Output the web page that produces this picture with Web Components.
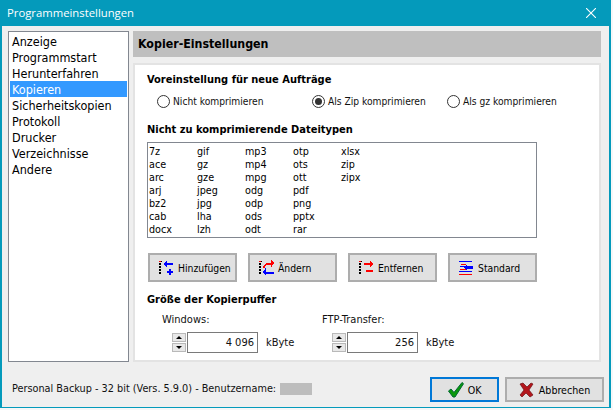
<!DOCTYPE html>
<html lang="de">
<head>
<meta charset="utf-8">
<title>Programmeinstellungen</title>
<style>
  html, body { margin: 0; padding: 0; background: #f7f7f7; }
  body { font: 11px "DejaVu Sans Condensed", "DejaVu Sans", sans-serif; font-stretch: condensed; color: #000; }
</style>
</head>
<body>
<pb-dialog caption="Programmeinstellungen">
  <pb-nav slot="nav">
    <pb-nav-item>Anzeige</pb-nav-item>
    <pb-nav-item>Programmstart</pb-nav-item>
    <pb-nav-item>Herunterfahren</pb-nav-item>
    <pb-nav-item selected>Kopieren</pb-nav-item>
    <pb-nav-item>Sicherheitskopien</pb-nav-item>
    <pb-nav-item>Protokoll</pb-nav-item>
    <pb-nav-item>Drucker</pb-nav-item>
    <pb-nav-item>Verzeichnisse</pb-nav-item>
    <pb-nav-item>Andere</pb-nav-item>
  </pb-nav>

  <pb-panel slot="panel" heading="Kopier-Einstellungen">
    <pb-heading style="margin-top:6px">Voreinstellung für neue Aufträge</pb-heading>
    <pb-radio-row>
      <pb-radio>Nicht komprimieren</pb-radio>
      <pb-radio checked>Als Zip komprimieren</pb-radio>
      <pb-radio>Als gz komprimieren</pb-radio>
    </pb-radio-row>

    <pb-heading style="margin-top:12px">Nicht zu komprimierende Dateitypen</pb-heading>
    <pb-file-box>
      <span>7z</span><span>ace</span><span>arc</span><span>arj</span><span>bz2</span><span>cab</span><span>docx</span>
      <span>gif</span><span>gz</span><span>gze</span><span>jpeg</span><span>jpg</span><span>lha</span><span>lzh</span>
      <span>mp3</span><span>mp4</span><span>mpg</span><span>odg</span><span>odp</span><span>ods</span><span>odt</span>
      <span>otp</span><span>ots</span><span>ott</span><span>pdf</span><span>png</span><span>pptx</span><span>rar</span>
      <span>xlsx</span><span>zip</span><span>zipx</span>
    </pb-file-box>

    <pb-button-row>
      <pb-button wide icon="add">Hinzufügen</pb-button>
      <pb-button wide icon="change">Ändern</pb-button>
      <pb-button wide icon="remove">Entfernen</pb-button>
      <pb-button wide icon="standard">Standard</pb-button>
    </pb-button-row>

    <pb-heading style="margin-top:9px">Größe der Kopierpuffer</pb-heading>
    <pb-spin-row>
      <pb-spin label="Windows:" value="4 096" unit="kByte"></pb-spin>
      <pb-spin label="FTP-Transfer:" value="256" unit="kByte"></pb-spin>
    </pb-spin-row>
  </pb-panel>

  <pb-status slot="status" user="Benutzername:">Personal Backup - 32 bit (Vers. 5.9.0) -</pb-status>
  <pb-button slot="actions" default icon="ok" style="width:69px">OK</pb-button>
  <pb-button slot="actions" icon="cancel" style="width:99px">Abbrechen</pb-button>
</pb-dialog>

<script>
// Icons for the buttons, all on a 16x16 grid
const dots = '<path fill="#000" d="M0 3h2v2H0zM0 6h2v2H0zM0 9h2v2H0zM0 12h2v2H0z"/><path fill="#f00" d="M0 1h2v1H0z"/><path fill="#000" d="M2 1h1v1H2z"/>';
const ICONS = {
  add: dots + '<path fill="#00f" d="M8 3h6v2H8zM7 1h1v6H7zM6 2h1v4H6zM5 3h1v2H5zM10 9h2v2h2v2h-2v2h-2v-2H8v-2h2z"/>',
  change: dots + '<path fill="#f00" d="M5 5h1V4h1V3h6v2H7v1H6v2H4V6h1z"/><path fill="#f00" d="M12 0h1v1h1v1h1v2h-1v1h-1v2h-1z"/><path fill="#00f" d="M7 12h8v2H7z"/><path fill="#00f" d="M6 8h1v7H6V14H5v-1H4v-2h1v-1h1z"/>',
  remove: dots + '<path fill="#f00" d="M5 3h7v2H5zM11 1h1v6h-1zM12 2h1v4h-1zM13 3h1v2h-1zM7 10h7v2H7z"/>',
  standard: '<path fill="#00f" d="M0 1h13v1H0zM1 6h6v1H1zM0 11h13v1H0z"/><path fill="#f00" d="M2 4h5v1H2zM1 9h6v1H1zM0 14h13v1H0z"/><path fill="#00f" d="M8 6h6v3H8zM7 5h1v5H7zM6 6h1v3H6zM5 7h1v1H5z"/>',
  ok: '<path fill="#0a9a0a" stroke="#063" stroke-width="1" d="M.5 9l2.5-2 3 3.5L14 .5l1.5 1.2L7 15H5z"/>',
  cancel: '<path fill="#b3161c" stroke="#6d1014" stroke-width=".7" d="M1 2l3-1 4 4 4-4 2 1-4 6 4 5-3 2-4-4-4 4-2-2 4-5z"/>'
};

class PbDialog extends HTMLElement {
  constructor() {
    super();
    this.attachShadow({ mode: 'open' });
  }
  connectedCallback() {
    this.shadowRoot.innerHTML = `
      <style>
        :host { display: flex; flex-direction: column; box-sizing: border-box; width: 611px; height: 408px;
                background: #efefef; border: 2px solid #049abb; border-top: 0; border-bottom-width: 1px; }
        .title { display: flex; align-items: center; justify-content: space-between; box-sizing: border-box; height: 26px; margin: 0 -2px;
                 background: #049abb; color: #fff; padding: 0 15px 1px 7px; font: 11.3px "Open Sans", sans-serif; flex: none; }
        .title svg { display: block; }
        .main { display: flex; gap: 4px; height: 331px; margin: 5px 8px 0 6px; flex: none; }
        .footer { display: flex; align-items: center; justify-content: space-between; height: 25px;
                  margin: 15px 5px 0 10px; }
        .actions { display: flex; gap: 6px; }
      </style>
      <div class="title">
        <span>${this.getAttribute('caption')}</span>
        <svg width="10" height="10" viewBox="0 0 10 10"><path d="M0 0l10 10M10 0L0 10" stroke="#fff" stroke-width="1.1"/></svg>
      </div>
      <div class="main"><slot name="nav"></slot><slot name="panel"></slot></div>
      <div class="footer"><slot name="status"></slot><div class="actions"><slot name="actions"></slot></div></div>`;
  }
}

class PbNav extends HTMLElement {
  constructor() {
    super();
    this.attachShadow({ mode: 'open' }).innerHTML = `
      <style>
        :host { display: block; box-sizing: border-box; width: 121px; height: 100%; background: #fff;
                border: 1px solid #828790; padding: 1px; }
      </style>
      <slot></slot>`;
  }
}

class PbNavItem extends HTMLElement {
  constructor() {
    super();
    this.attachShadow({ mode: 'open' }).innerHTML = `
      <style>
        :host { display: block; height: 16px; line-height: 18px; padding-left: 2px; font-size: 12.5px; white-space: nowrap; }
        :host([selected]) { background: #3399ff; color: #fff; }
      </style>
      <slot></slot>`;
  }
}

class PbPanel extends HTMLElement {
  constructor() {
    super();
    this.attachShadow({ mode: 'open' });
  }
  connectedCallback() {
    this.shadowRoot.innerHTML = `
      <style>
        :host { display: flex; flex-direction: column; width: 468px; height: 100%; }
        h2 { margin: 0; height: 26px; line-height: 26px; padding-left: 5px; background: #bfbfbf;
             font-size: 12.3px; font-weight: 700; flex: none; }
        .body { flex: 1; margin-top: 6px; box-sizing: border-box; background: #fff; border: 2px solid #e3e3e3;
                padding-left: 12px; }
      </style>
      <h2>${this.getAttribute('heading')}</h2>
      <div class="body"><slot></slot></div>`;
  }
}

class PbHeading extends HTMLElement {
  constructor() {
    super();
    this.attachShadow({ mode: 'open' }).innerHTML = `
      <style>
        :host { display: block; height: 16px; line-height: 18px; font-size: 11px; font-weight: 700; }
      </style>
      <slot></slot>`;
  }
}

class PbRadioRow extends HTMLElement {
  constructor() {
    super();
    this.attachShadow({ mode: 'open' }).innerHTML = `
      <style>
        :host { display: grid; grid-template-columns: 155px 135px 1fr; margin: 6px 0 0 10px; }
      </style>
      <slot></slot>`;
  }
}

class PbRadio extends HTMLElement {
  constructor() {
    super();
    this.attachShadow({ mode: 'open' }).innerHTML = `
      <style>
        :host { display: flex; align-items: center; gap: 3px; height: 16px; font-size: 10.2px; color: #111; white-space: nowrap; }
        svg { display: block; flex: none; }
        .dot { display: none; }
        :host([checked]) .dot { display: block; }
      </style>
      <svg width="13" height="13" viewBox="0 0 13 13">
        <circle cx="6.5" cy="6.5" r="6" fill="#fff" stroke="#333" stroke-width="1"/>
        <circle class="dot" cx="6.5" cy="6.5" r="3.5" fill="#333"/>
      </svg>
      <slot></slot>`;
  }
}

class PbFileBox extends HTMLElement {
  constructor() {
    super();
    this.attachShadow({ mode: 'open' }).innerHTML = `
      <style>
        :host { display: grid; grid-auto-flow: column; grid-template-rows: repeat(7, 13px); grid-auto-columns: 48px;
                align-content: start; box-sizing: border-box; width: 390px; height: 96px; margin-top: 5px;
                padding: 2px 0 0 1px; border: 1px solid #828790; font-size: 10.7px; line-height: 13px; }
      </style>
      <slot></slot>`;
  }
}

class PbButtonRow extends HTMLElement {
  constructor() {
    super();
    this.attachShadow({ mode: 'open' }).innerHTML = `
      <style>
        :host { display: flex; gap: 11px; margin: 15px 0 0 1px; }
      </style>
      <slot></slot>`;
  }
}

class PbButton extends HTMLElement {
  constructor() {
    super();
    this.attachShadow({ mode: 'open' });
  }
  connectedCallback() {
    const icon = ICONS[this.getAttribute('icon')] || '';
    this.shadowRoot.innerHTML = `
      <style>
        :host { display: flex; align-items: center; justify-content: center; gap: 4px; box-sizing: border-box;
                height: 25px; background: #e1e1e1; border: 2px solid #adadad; font-size: 10.6px; white-space: nowrap; }
        :host([default]) { border-color: #0078d7; }
        :host([wide]) { width: 89px; height: 29px; justify-content: flex-start; padding-left: 9px; gap: 3px; font-size: 10.3px; }
        svg { display: block; flex: none; }
      </style>
      <svg width="16" height="16" viewBox="0 0 16 16" shape-rendering="${/ok|cancel/.test(this.getAttribute('icon')) ? 'auto' : 'crispEdges'}">${icon}</svg>
      <slot></slot>`;
  }
}

class PbSpinRow extends HTMLElement {
  constructor() {
    super();
    this.attachShadow({ mode: 'open' }).innerHTML = `
      <style>
        :host { display: grid; grid-template-columns: 160px 1fr; margin: 4px 0 0 15px; }
      </style>
      <slot></slot>`;
  }
}

class PbSpin extends HTMLElement {
  constructor() {
    super();
    this.attachShadow({ mode: 'open' });
  }
  connectedCallback() {
    this.shadowRoot.innerHTML = `
      <style>
        :host { display: block; color: #111; }
        .label { height: 16px; line-height: 18px; }
        .row { display: flex; align-items: center; height: 21px; margin: 5px 0 0 10px; }
        .arrows { display: flex; flex-direction: column; gap: 1px; width: 15px; flex: none; }
        .arrows i { display: flex; align-items: center; justify-content: center; box-sizing: border-box;
                    width: 14px; height: 9px; background: #e8e8e8; border: 1px solid #b9b9b9; }
        .up::before { content: ""; border: 3px solid transparent; border-top: 0; border-bottom: 3px solid #000; }
        .down::before { content: ""; border: 3px solid transparent; border-bottom: 0; border-top: 3px solid #000; }
        .value { box-sizing: border-box; width: 71px; height: 21px; line-height: 19px; padding-right: 3px;
                 text-align: right; background: #fff; border: 1px solid #7a7a7a; }
        .unit { margin-left: 8px; }
      </style>
      <div class="label">${this.getAttribute('label')}</div>
      <div class="row">
        <div class="arrows"><i class="up"></i><i class="down"></i></div>
        <div class="value">${this.getAttribute('value')}</div>
        <span class="unit">${this.getAttribute('unit')}</span>
      </div>`;
  }
}

class PbStatus extends HTMLElement {
  constructor() {
    super();
    this.attachShadow({ mode: 'open' });
  }
  connectedCallback() {
    this.shadowRoot.innerHTML = `
      <style>
        :host { display: flex; align-items: center; gap: 3px; height: 16px; margin-bottom: 2px; font-size: 10.8px; color: #111; white-space: nowrap; }
        .masked { width: 32px; height: 12px; margin-left: 1px; background: #bdbdbd; }
      </style>
      <slot></slot><span>${this.getAttribute('user')}</span><span class="masked"></span>`;
  }
}

customElements.define('pb-dialog', PbDialog);
customElements.define('pb-nav', PbNav);
customElements.define('pb-nav-item', PbNavItem);
customElements.define('pb-panel', PbPanel);
customElements.define('pb-heading', PbHeading);
customElements.define('pb-radio-row', PbRadioRow);
customElements.define('pb-radio', PbRadio);
customElements.define('pb-file-box', PbFileBox);
customElements.define('pb-button-row', PbButtonRow);
customElements.define('pb-button', PbButton);
customElements.define('pb-spin-row', PbSpinRow);
customElements.define('pb-spin', PbSpin);
customElements.define('pb-status', PbStatus);
</script>
</body>
</html>
